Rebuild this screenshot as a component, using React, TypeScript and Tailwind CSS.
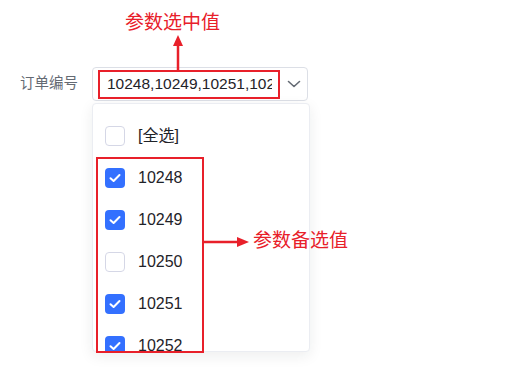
import React from 'react';

const options = [
  { label: '[全选]', checked: false },
  { label: '10248', checked: true },
  { label: '10249', checked: true },
  { label: '10250', checked: false },
  { label: '10251', checked: true },
  { label: '10252', checked: true },
];

function Checkbox({ checked }: { checked: boolean }) {
  if (checked) {
    return (
      <span className="flex h-[20px] w-[20px] shrink-0 items-center justify-center rounded-[4px] bg-[#3370ff]">
        <svg width="12" height="10" viewBox="0 0 12 10" fill="none">
          <path d="M1.5 5.2L4.6 8L10.5 2" stroke="white" strokeWidth="2" strokeLinecap="round" strokeLinejoin="round" />
        </svg>
      </span>
    );
  }
  return <span className="h-[20px] w-[20px] shrink-0 rounded-[4px] border border-[#d5d7e6] bg-white" />;
}

export default function App() {
  return (
    <div className="relative h-[372px] w-[514px] overflow-hidden bg-white font-['Liberation_Sans','Noto_Sans_CJK_SC',sans-serif] text-[#1f2329]">
      <div className="flex items-start pl-[20px] pt-[67px]">
        <div className="flex h-[34px] w-[72px] items-center text-[14.5px] text-[#646a73]">订单编号</div>
        <div className="flex flex-col">
          <div className="flex h-[34px] w-[216px] items-center rounded-[4px] border border-[#dcdfe6] bg-white">
            <div className="w-[179px] overflow-hidden whitespace-nowrap pl-[14px] text-[15.5px]">10248,10249,10251,10252</div>
            <div className="flex flex-1 items-center justify-end pr-[6px]">
              <svg width="14" height="8" viewBox="0 0 14 8" fill="none">
                <path d="M1.5 1.5L7 6.5L12.5 1.5" stroke="#646a73" strokeWidth="1.6" strokeLinecap="round" strokeLinejoin="round" />
              </svg>
            </div>
          </div>
          <div className="mt-[2px] h-[249px] w-[218px] overflow-hidden rounded-[4px] border border-[#ebedf2] bg-white pt-[11px] shadow-[0_4px_14px_rgba(31,35,41,0.08)]">
            {options.map((o) => (
              <div key={o.label} className="flex h-[42px] items-center gap-[13px] pl-[12px] text-[16px]">
                <Checkbox checked={o.checked} />
                <span>{o.label}</span>
              </div>
            ))}
          </div>
        </div>
      </div>

      {/* annotations */}
      <div className="absolute left-[125px] top-[11px] text-[19px] leading-[24px] text-[#e8202a]">参数选中值</div>
      <svg className="absolute left-[172px] top-[35px]" width="12" height="37" viewBox="0 0 12 37">
        <path d="M6 0L11 11H1Z" fill="#e8202a" />
        <path d="M6 9V37" stroke="#e8202a" strokeWidth="2.5" />
      </svg>
      <div className="absolute left-[98px] top-[70px] h-[29px] w-[182px] border-2 border-[#e8202a]" />

      <div className="absolute left-[96px] top-[157px] h-[196px] w-[108px] border-2 border-[#e8202a]" />
      <svg className="absolute left-[203px] top-[236px]" width="46" height="12" viewBox="0 0 46 12">
        <path d="M0 6H36" stroke="#e8202a" strokeWidth="2.5" />
        <path d="M46 6L34 1V11Z" fill="#e8202a" />
      </svg>
      <div className="absolute left-[253px] top-[229px] text-[19px] leading-[24px] text-[#e8202a]">参数备选值</div>
    </div>
  );
}
